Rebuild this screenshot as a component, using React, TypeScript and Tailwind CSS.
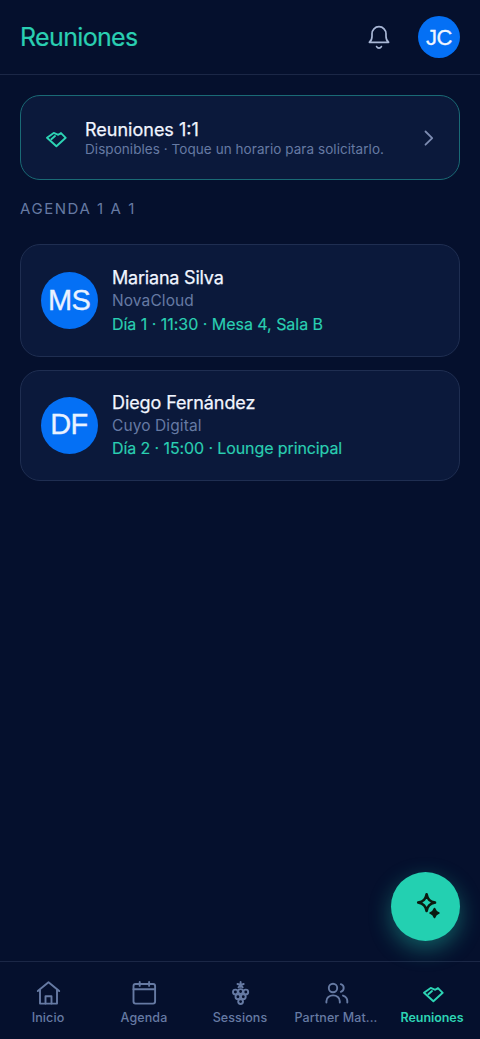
import type { ReactNode } from "react";

interface Meeting {
  initials: string;
  name: string;
  company: string;
  slot: string;
  cardClass: string;
  nameClass: string;
  companyClass: string;
  slotClass: string;
}

const meetings: Meeting[] = [
  {
    initials: "MS",
    name: "Mariana Silva",
    company: "NovaCloud",
    slot: "Día 1 · 11:30 · Mesa 4, Sala B",
    cardClass: "h-[113px]",
    nameClass: "tracking-[-0.2px]",
    companyClass: "leading-[22px]",
    slotClass: "tracking-[-0.03px]",
  },
  {
    initials: "DF",
    name: "Diego Fernández",
    company: "Cuyo Digital",
    slot: "Día 2 · 15:00 · Lounge principal",
    cardClass: "mt-[12.5px] h-[111px]",
    nameClass: "tracking-[-0.1px]",
    companyClass: "leading-[21px]",
    slotClass: "tracking-[-0.1px]",
  },
];

function BellIcon() {
  return (
    <svg
      className="size-6"
      viewBox="0 0 24 24"
      fill="none"
      stroke="currentColor"
      strokeWidth="1.7"
      strokeLinecap="round"
      strokeLinejoin="round"
    >
      <path d="M2.4 17.300c1.900-1.300 2.600-3.300 2.600-6V8.800C5 4.900 8 1.700 12 1.700s7 3.200 7 7.100v2.500c0 2.700.7 4.700 2.600 6z" />
      <path d="M9.600 21.600c.6 1 1.400 1.500 2.400 1.500s1.800-.5 2.400-1.500" />
    </svg>
  );
}

function HandshakeIcon() {
  return (
    <svg
      className="size-[22px]"
      viewBox="0 0 22 22"
      fill="none"
      stroke="currentColor"
      strokeWidth="1.9"
      strokeLinecap="round"
      strokeLinejoin="round"
    >
      <path d="M2 10.800 8.700 5.900l4.600 1.900L16 6.100l4.700 4.700-9.300 8.500z" />
      <path d="M6.300 12.200 10 9" />
    </svg>
  );
}

function HomeIcon() {
  return (
    <svg
      className="size-[26px]"
      viewBox="0 0 26 26"
      fill="none"
      stroke="currentColor"
      strokeWidth="1.9"
      strokeLinecap="round"
      strokeLinejoin="round"
    >
      <path d="M2.800 11.100 13.500 2.200l10.700 8.900" />
      <path d="M5 9.600v14h17v-14" />
      <path d="M10.500 23.600v-7.300h6v7.300" />
    </svg>
  );
}

function CalendarIcon() {
  return (
    <svg
      className="size-[26px]"
      viewBox="0 0 26 26"
      fill="none"
      stroke="currentColor"
      strokeWidth="1.9"
      strokeLinecap="round"
      strokeLinejoin="round"
    >
      <rect x="2.500" y="4" width="21.600" height="19.600" rx="2" />
      <path d="M2.500 9.300h21.600M8.700 1.900v4M18.100 1.900v4" />
    </svg>
  );
}

function GrapesIcon() {
  return (
    <svg
      className="size-[26px]"
      viewBox="0 0 26 26"
      fill="none"
      stroke="currentColor"
      strokeWidth="1.9"
      strokeLinecap="round"
      strokeLinejoin="round"
    >
      <path d="M13.600 1.900v5M10.500 4l3.100.9 3.100-.9M11.500 7.300l2.100-2.400 2.100 2.400" />
      <circle cx="8.400" cy="12" r="2.400" />
      <circle cx="13.600" cy="11.500" r="2.400" />
      <circle cx="18.800" cy="12" r="2.400" />
      <circle cx="10.900" cy="16.700" r="2.400" />
      <circle cx="16.300" cy="16.700" r="2.400" />
      <circle cx="13.600" cy="21.600" r="2.400" />
    </svg>
  );
}

function UsersIcon() {
  return (
    <svg
      className="size-[26px]"
      viewBox="0 0 26 26"
      fill="none"
      stroke="currentColor"
      strokeWidth="1.9"
      strokeLinecap="round"
    >
      <circle cx="10" cy="8" r="4.200" />
      <path d="M3.400 22.600v-1.400c0-3.300 3-5.800 6.700-5.800s6.700 2.500 6.700 5.800v1.400" />
      <path d="M17.800 4.200c1.800.6 2.900 2 2.900 3.800s-1.100 3.200-2.900 3.800" />
      <path d="M20 15.600c2.700.9 4.300 3 4.300 5.400v1.600" />
    </svg>
  );
}

function SparklesIcon() {
  return (
    <svg className="size-7" viewBox="0 0 28 28" fill="none" stroke="currentColor" strokeLinejoin="round">
      <path
        d="M14.600 2.200c1 5.100 3 7.100 8.400 8.400-5.400 1.300-7.400 3.300-8.400 8.400-1-5.100-3-7.100-8.400-8.400 5.400-1.300 7.400-3.300 8.400-8.400z"
        strokeWidth="2.6"
      />
      <path
        d="M22.500 16.600c.8 2.700 1.700 3.600 4.400 4.400-2.700.8-3.600 1.700-4.400 4.400-.8-2.700-1.700-3.600-4.400-4.400 2.700-.8 3.600-1.700 4.400-4.400z"
        fill="currentColor"
        strokeWidth="1.7"
      />
    </svg>
  );
}

interface TabProps {
  label: string;
  icon: ReactNode;
  active?: boolean;
}

function Tab({ label, icon, active = false }: TabProps) {
  return (
    <button
      className={`flex w-24 flex-col items-center ${active ? "font-semibold text-[#2dd4b4]" : "font-medium text-[#667aa3]"}`}
    >
      <span className={`flex h-[26px] items-center justify-center ${active ? "pl-0.5" : ""}`}>{icon}</span>
      <span
        className={`mt-1 text-[12.5px] leading-4 whitespace-nowrap ${active ? "tracking-[-0.05px]" : "tracking-[0.1px]"}`}
      >
        {label}
      </span>
    </button>
  );
}

export default function App() {
  return (
    <div className="relative flex h-[1039px] w-[480px] flex-col overflow-hidden bg-[#05102d] font-['Inter',sans-serif]">
      <header className="flex h-[75px] shrink-0 items-center justify-between border-b border-[#1b2746] px-5">
        <h1 className="text-[25px] leading-8 tracking-[-0.65px] text-[#2acfb2] [-webkit-text-stroke:0.2px]">
          Reuniones
        </h1>
        <div className="flex items-center gap-[27px] text-[#a9b7d6]">
          <BellIcon />
          <div className="flex size-[42px] items-center justify-center rounded-full bg-[#0470f5] font-['Liberation_Sans',sans-serif] text-[22px] tracking-[-0.4px] text-[#f0f5ff] [-webkit-text-stroke:0.3px]">
            JC
          </div>
        </div>
      </header>

      <main className="flex-1 px-5 pt-5">
        <button className="flex h-[85px] w-full items-center rounded-[20px] border border-[#1a6a75] bg-[#0b193b] px-6 text-left">
          <span className="text-[#2dd4b4]">
            <HandshakeIcon />
          </span>
          <span className="ml-[18px] flex-1">
            <span className="block pt-px text-[18px] leading-[22px] text-[#f1f5ff] [-webkit-text-stroke:0.25px]">
              Reuniones 1:1
            </span>
            <span className="block text-[13.5px] leading-[17px] tracking-[0.06px] text-[#667aa3]">
              Disponibles · Toque un horario para solicitarlo.
            </span>
          </span>
          <svg
            className="h-4 w-3 text-[#7d8cb2]"
            viewBox="0 0 12 16"
            fill="none"
            stroke="currentColor"
            strokeWidth="1.8"
            strokeLinecap="round"
            strokeLinejoin="round"
          >
            <path d="m2.500 1.500 6.700 6.600-6.700 6.600" />
          </svg>
        </button>

        <h2 className="mt-5 text-[15px] leading-[18px] tracking-[1.55px] text-[#667aa3]">AGENDA 1 A 1</h2>

        <section className="mt-[26px]">
          {meetings.map((meeting) => (
            <article
              key={meeting.initials}
              className={`flex items-center rounded-[20px] border border-[#1f2e51] bg-[#0b193b] px-[19.5px] ${meeting.cardClass}`}
            >
              <div className="flex size-[57px] items-center justify-center rounded-full bg-[#0470f5] font-['Liberation_Sans',sans-serif] text-[29px] tracking-[-0.7px] text-[#e9f2ff] [-webkit-text-stroke:0.3px]">
                {meeting.initials}
              </div>
              <div className="ml-[14.5px] pt-px">
                <h3
                  className={`text-[18px] leading-[24px] text-[#f1f5ff] [-webkit-text-stroke:0.25px] ${meeting.nameClass}`}
                >
                  {meeting.name}
                </h3>
                <p className={`text-[15.5px] tracking-[0.1px] text-[#667aa3] ${meeting.companyClass}`}>
                  {meeting.company}
                </p>
                <p className={`text-[16px] leading-[24px] text-[#2acfb2] [-webkit-text-stroke:0.15px] ${meeting.slotClass}`}>
                  {meeting.slot}
                </p>
              </div>
            </article>
          ))}
        </section>
      </main>

      <button className="absolute right-5 bottom-[98.5px] flex size-[69px] items-center justify-center rounded-full bg-[#23d0b1] text-[#0b1a10] shadow-[0_8px_22px_rgba(35,208,177,0.4)]">
        <SparklesIcon />
      </button>

      <nav className="flex h-[78.5px] shrink-0 border-t border-[#1b2746] pt-[18px]">
        <Tab label="Inicio" icon={<HomeIcon />} />
        <Tab label="Agenda" icon={<CalendarIcon />} />
        <Tab label="Sessions" icon={<GrapesIcon />} />
        <Tab label="Partner Mat..." icon={<UsersIcon />} />
        <Tab label="Reuniones" icon={<HandshakeIcon />} active />
      </nav>
    </div>
  );
}
